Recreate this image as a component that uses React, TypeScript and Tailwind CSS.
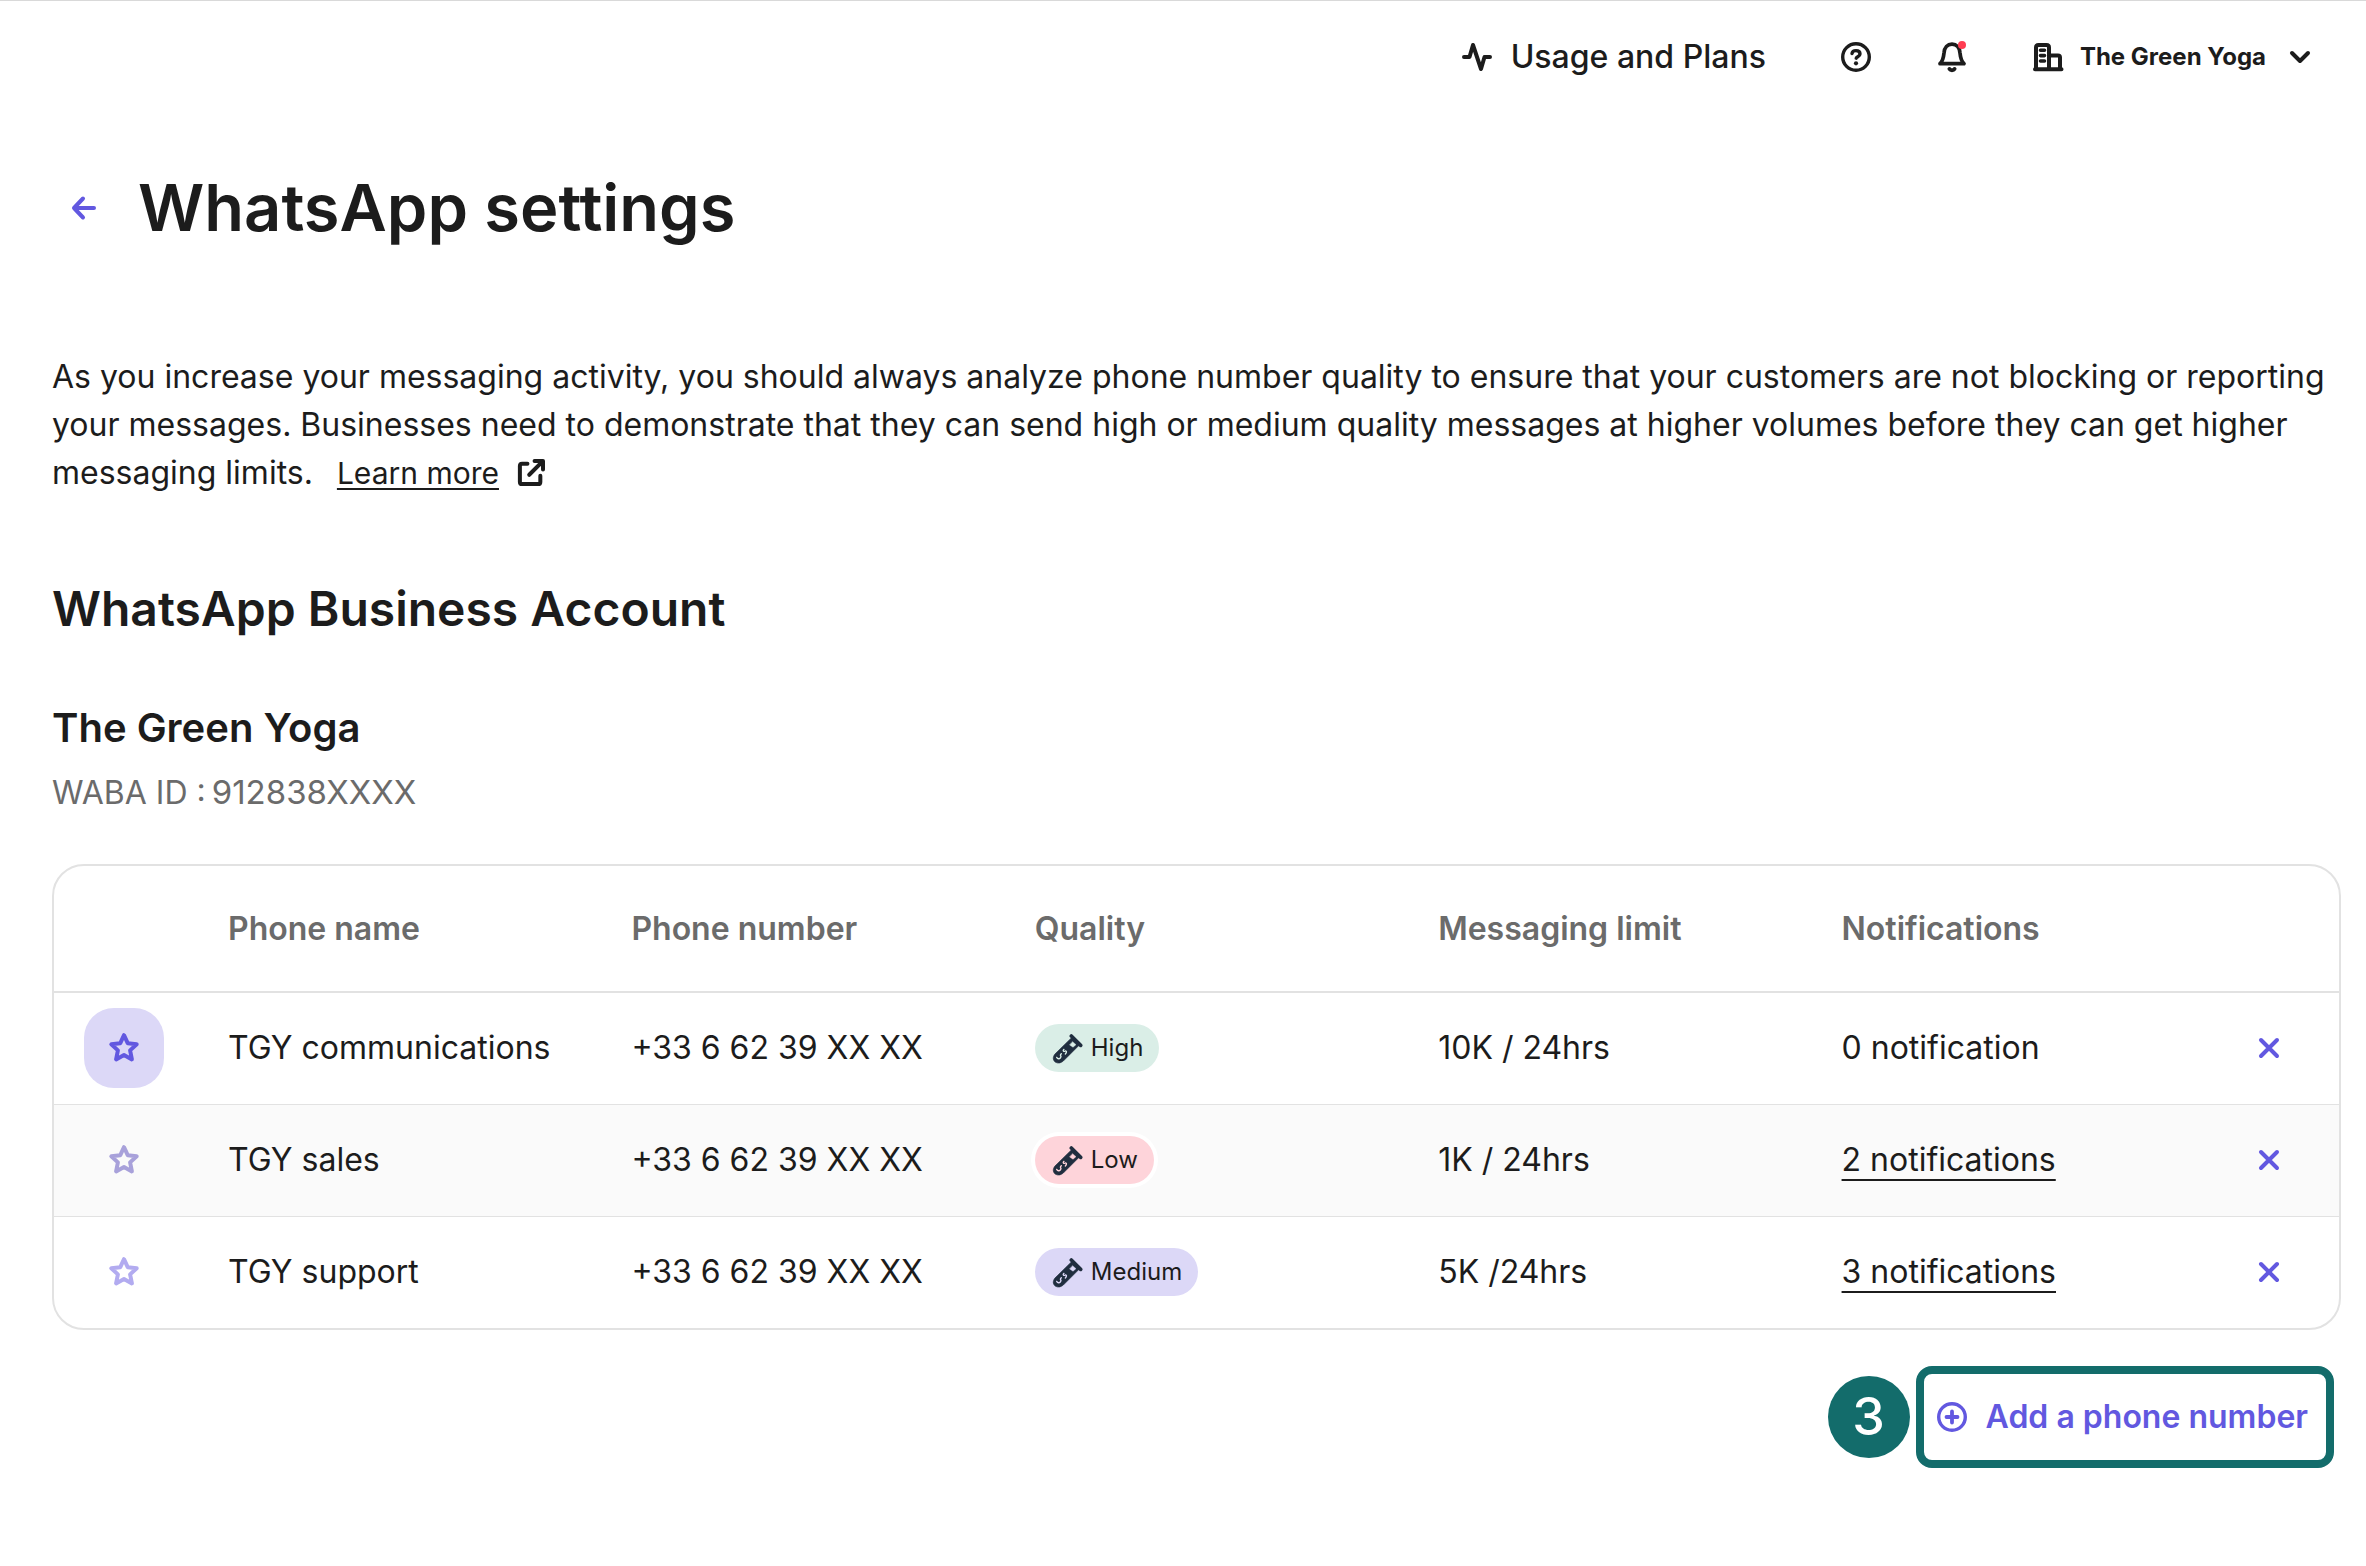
import type { ReactNode } from "react";

type IconProps = { className?: string; children: ReactNode; box?: string };

function Icon({ className = "", children, box = "0 0 36 36" }: IconProps) {
  return (
    <svg
      viewBox={box}
      className={`shrink-0 ${className}`}
      fill="none"
      stroke="currentColor"
      strokeWidth={4}
      strokeLinecap="round"
      strokeLinejoin="round"
      aria-hidden="true"
    >
      {children}
    </svg>
  );
}

const Star = ({ className }: { className: string }) => (
  <Icon className={`size-9 ${className}`}>
    <path d="M18 5.2l3.7 8 9 1.1-6.6 6.1 1.8 9-7.9-4.4-7.9 4.4 1.8-9-6.6-6.1 9-1.1z" />
  </Icon>
);

const Tube = ({ tint }: { tint: string }) => (
  <svg viewBox="0 0 96 96" className="size-8 shrink-0" fill="none" strokeLinecap="round" strokeLinejoin="round" aria-hidden="true">
    <path d="M61 12L89 40" stroke="#202e3f" strokeWidth="11" />
    <path d="M62 17L12 66C4 76 6 86 14 91C22 95 30 93 37 87L86 38Z" fill="#202e3f" stroke="#202e3f" strokeWidth="2" />
    <path d="M65 29L75 38L66 46L56 39Z" className={tint} />
    <path d="M39 52C34 56 38 60 43 57C48 56 47 62 43 66M17 76C20 83 29 81 30 74C28 71 27 68 31 65" className={tint} style={{ fill: "none" }} strokeWidth="4" />
  </svg>
);

const qualities = {
  High: { pill: "bg-[#daeee7]", tint: "fill-[#daeee7] stroke-[#daeee7]" },
  Low: { pill: "bg-[#fed4da] ring-4 ring-white", tint: "fill-[#fed4da] stroke-[#fed4da]" },
  Medium: { pill: "bg-[#dcd8f7]", tint: "fill-[#dcd8f7] stroke-[#dcd8f7]" },
};

type Row = {
  name: string;
  number: string;
  quality: keyof typeof qualities;
  limit: string;
  notifications: string;
  linked: boolean;
  row: string;
  starButton: string;
  star: string;
};

const rows: Row[] = [
  { name: "TGY communications", number: "+33 6 62 39 XX XX", quality: "High", limit: "10K / 24hrs", notifications: "0 notification", linked: false, row: "border-b border-[#e2e2e2]", starButton: "bg-[#dcd8f7]", star: "text-[#6258e0]" },
  { name: "TGY sales", number: "+33 6 62 39 XX XX", quality: "Low", limit: "1K / 24hrs", notifications: "2 notifications", linked: true, row: "border-b border-[#e2e2e2] bg-[#fafafa]", starButton: "", star: "text-[#a8a1da]" },
  { name: "TGY support", number: "+33 6 62 39 XX XX", quality: "Medium", limit: "5K /24hrs", notifications: "3 notifications", linked: true, row: "", starButton: "", star: "text-[#b2abf0]" },
];

const columns = ["Phone name", "Phone number", "Quality", "Messaging limit", "Notifications"];

function TopBar() {
  return (
    <header className="flex h-28 items-center justify-end border-t border-[#d9d9d9] pr-12">
      <a href="#usage" className="flex items-center gap-4 text-[32px] leading-12 font-medium">
        <Icon className="size-9">
          <path d="M5 18H10.500L14 6L22 30L25.500 18H31" />
        </Icon>
        Usage and Plans
      </a>
      <button type="button" aria-label="Help" className="ml-18">
        <Icon className="size-9">
          <circle cx="18" cy="18" r="13.300" strokeWidth="3.400" />
          <path d="M14 14.500C14.300 12.600 15.900 11.600 18 11.600C20.300 11.600 22 12.900 22 15C22 17.600 18.500 17.600 18.200 19.200" strokeWidth="3.400" />
          <circle cx="18" cy="24.300" r="2.100" fill="currentColor" stroke="none" />
        </Icon>
      </button>
      <button type="button" aria-label="Alerts" className="ml-15">
        <Icon className="size-9">
          <path d="M6 24.700C9 22 9.500 19 10 14C10.400 8.500 13.500 5.200 18 5.200C22.500 5.200 25.600 8.500 26 14C26.500 19 27 22 30 24.700Z" strokeWidth="3.700" />
          <path d="M15.500 30C16.500 31.500 19.500 31.500 20.500 30" />
          <circle cx="28" cy="6" r="4" fill="#ff3d52" stroke="none" />
        </Icon>
      </button>
      <button type="button" className="ml-15 flex items-center text-2xl leading-8 font-bold">
        <Icon className="size-9">
          <path d="M5 30.200H31.500M6 30V8.500C6 7 7 6 8.500 6H16.500C18 6 19 7 19 8.500V30M19 16.500H28C29.500 16.500 30 17.300 30 18.500V30" />
          <path d="M10.500 11.200H14.500M10.500 16.600H14.500M10.500 22H14.500" strokeWidth="3.600" />
        </Icon>
        <span className="mr-4 ml-3.5">The Green Yoga</span>
        <Icon className="size-9">
          <path d="M10 14L18 22L26 14" />
        </Icon>
      </button>
    </header>
  );
}

function PhoneTable() {
  return (
    <div className="mt-12 overflow-hidden rounded-[32px] border-2 border-[#e2e2e2]">
      <table className="w-full table-fixed border-collapse text-left text-[32px] leading-12">
        <thead>
          <tr className="h-[126px] border-b-2 border-[#e2e2e2] text-[#6b6b6b]">
            <td className="w-[140px]" />
            {columns.map((label) => (
              <th key={label} scope="col" className="pl-8.5 font-semibold">
                {label}
              </th>
            ))}
            <td className="w-[128px]" />
          </tr>
        </thead>
        <tbody>
          {rows.map((r) => (
            <tr key={r.name} className={`h-28 ${r.row}`}>
              <td>
                <button type="button" aria-label={`Favourite ${r.name}`} className={`mx-auto flex size-20 items-center justify-center rounded-[30px] ${r.starButton}`}>
                  <Star className={r.star} />
                </button>
              </td>
              <td className="pl-8.5 whitespace-nowrap">{r.name}</td>
              <td className="pl-8.5 whitespace-nowrap">{r.number}</td>
              <td className="pl-8.5">
                <span className={`flex h-12 w-fit items-center gap-2 rounded-full px-4 text-2xl ${qualities[r.quality].pill}`}>
                  <Tube tint={qualities[r.quality].tint} />
                  {r.quality}
                </span>
              </td>
              <td className="pl-8.5 whitespace-nowrap">{r.limit}</td>
              <td className="pl-8.5 whitespace-nowrap">
                {r.linked ? (
                  <a href="#notifications" className="underline decoration-2 underline-offset-8">
                    {r.notifications}
                  </a>
                ) : (
                  r.notifications
                )}
              </td>
              <td className="pr-3">
                <button type="button" aria-label={`Remove ${r.name}`} className="mx-auto block text-[#6258e0]">
                  <Icon className="size-9">
                    <path d="M10 10L26 26M26 10L10 26" />
                  </Icon>
                </button>
              </td>
            </tr>
          ))}
        </tbody>
      </table>
    </div>
  );
}

export default function App() {
  return (
    <div className="min-h-screen bg-white font-['Inter',sans-serif] text-[#1c1c1c]">
      <TopBar />
      <main className="pr-[25px] pl-13">
        <div className="mt-12 flex h-24 items-center gap-9 pl-3.5">
          <button type="button" aria-label="Back" className="text-[#6258e0]">
            <Icon className="size-9">
              <path d="M28 18H8M17 8.500L8 18L17 27.500" />
            </Icon>
          </button>
          <h1 className="text-[65px] leading-24 font-semibold">WhatsApp settings</h1>
        </div>
        <p className="mt-[97px] text-[32px] leading-12">
          As you increase your messaging activity, you should always analyze phone number quality to ensure that your customers are not blocking or reporting your messages. Businesses need to demonstrate that they can send high or medium quality messages at higher volumes before they can get higher messaging limits.
          <a href="#learn-more" className="ml-6 inline-flex items-center gap-4 text-[30px]">
            <span className="underline decoration-2 underline-offset-4">Learn more</span>
            <Icon className="size-8">
              <path d="M14 7.500H8C6 7.500 5.500 8.500 5.500 10V28C5.500 30 6.500 30.500 8 30.500H26C27.800 30.500 28.500 29.500 28.500 28V21M22 4.500H31.500V14M30.500 5.500L16 20" strokeWidth="4.500" />
            </Icon>
          </a>
        </p>
        <h2 className="mt-20 text-5xl leading-16 font-semibold">WhatsApp Business Account</h2>
        <h3 className="mt-[63px] text-[40px] leading-12 font-semibold">The Green Yoga</h3>
        <p className="mt-4 flex h-12 items-baseline gap-1.5 text-[32px] leading-12 text-[#6b6b6b]">
          WABA ID : <span className="text-[33px]">912838XXXX</span>
        </p>
        <PhoneTable />
        <div className="mt-9 flex items-center justify-end gap-1.5 pr-[7px]">
          <span className="flex size-[82px] items-center justify-center rounded-full bg-[#136c6b] text-[52px] leading-none font-medium text-white">3</span>
          <button type="button" className="flex h-[102px] items-center gap-4 rounded-2xl border-8 border-[#136c6b] px-2.5 pr-4.5 text-[32px] leading-12 font-semibold text-[#6258e0]">
            <Icon className="size-9">
              <circle cx="18" cy="18" r="13.300" strokeWidth="3.400" />
              <path d="M18 12.500V23.500M12.500 18H23.500" strokeWidth="3.800" />
            </Icon>
            Add a phone number
          </button>
        </div>
      </main>
    </div>
  );
}
